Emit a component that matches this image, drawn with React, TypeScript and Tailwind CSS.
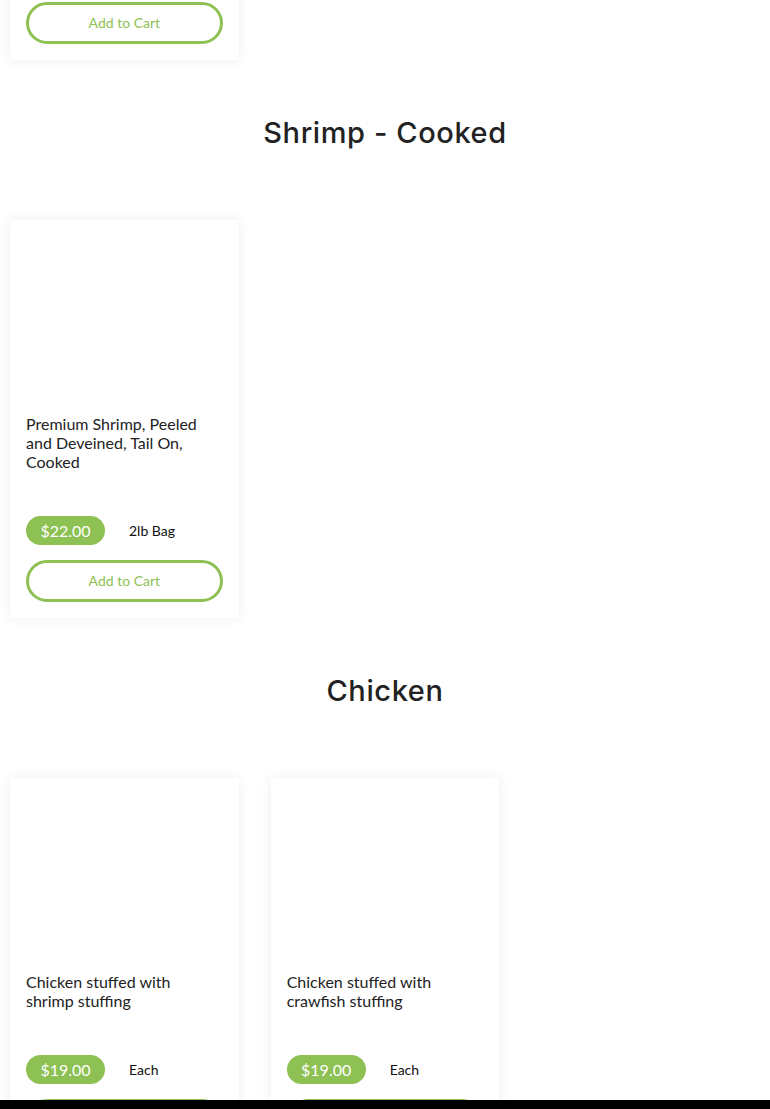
import React from "react";

type Product = { title: string; price: string; unit: string };

const lato = { fontFamily: "Lato, 'Open Sans', sans-serif" };

function AddToCart() {
  return (
    <button
      className="w-full h-[42px] rounded-full border-[3px] border-[#8dc153] bg-white text-[#8dc153] text-[14px] leading-none"
      style={lato}
    >
      Add to Cart
    </button>
  );
}

function Card({ p }: { p: Product }) {
  return (
    <div className="bg-white shadow-[0_0_12px_rgba(0,0,0,0.07)] px-4 pt-4 pb-4 flex flex-col">
      <div className="h-[178px]" />
      <div className="text-[16px] leading-[19px] text-[#222] pr-2" style={lato}>
        {p.title}
      </div>
      <div className="flex items-center gap-6 mt-[45px]">
        <span
          className="inline-flex items-center justify-center h-[29px] w-[79px] rounded-full bg-[#8dc153] text-white text-[16px]"
          style={lato}
        >
          {p.price}
        </span>
        <span className="text-[14px] text-[#111] -mt-[1px]" style={lato}>
          {p.unit}
        </span>
      </div>
      <div className="mt-[15px]">
        <AddToCart />
      </div>
    </div>
  );
}

function Heading({ children }: { children: React.ReactNode }) {
  return (
    <h2
      className="text-center text-[29px] leading-[34px] text-[#222] mt-[56px] mb-[70px] tracking-[0.6px] font-[450]"
      style={{ fontFamily: "Inter, 'Noto Sans', sans-serif" }}
    >
      {children}
    </h2>
  );
}

export default function App() {
  const shrimp: Product[] = [
    { title: "Premium Shrimp, Peeled and Deveined, Tail On, Cooked", price: "$22.00", unit: "2lb Bag" },
  ];
  const chicken: Product[] = [
    { title: "Chicken stuffed with shrimp stuffing", price: "$19.00", unit: "Each" },
    { title: "Chicken stuffed with crawfish stuffing", price: "$19.00", unit: "Each" },
  ];
  return (
    <div className="bg-white min-h-[1109px] overflow-hidden">
      <div className="px-[10px]">
        <div className="grid grid-cols-3 gap-x-8 -mt-[30px]">
          <div className="bg-white shadow-[0_0_12px_rgba(0,0,0,0.07)] px-4 pt-[32px] pb-4">
            <AddToCart />
          </div>
        </div>
        <Heading>Shrimp - Cooked</Heading>
        <div className="grid grid-cols-3 gap-x-8">
          {shrimp.map((p) => (
            <Card key={p.title} p={p} />
          ))}
        </div>
        <Heading>Chicken</Heading>
        <div className="grid grid-cols-3 gap-x-8">
          {chicken.map((p) => (
            <Card key={p.title} p={p} />
          ))}
        </div>
      </div>
      <div className="fixed left-0 right-0 bottom-0 h-[9px] bg-black" />
    </div>
  );
}
